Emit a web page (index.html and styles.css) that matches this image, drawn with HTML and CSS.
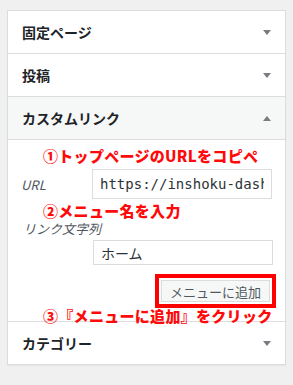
FILE: index.html
```html
<!DOCTYPE html>
<html lang="ja">
<head>
    <meta charset="UTF-8">
    <meta name="viewport" content="width=device-width, initial-scale=1.0">
    <title>メニュー項目を追加</title>
    <link rel="stylesheet" href="styles.css">
</head>
<body>
    <div class="panel">
        <!-- 固定ページ -->
        <div class="section">
            <div class="section-head">
                <span>固定ページ</span>
                <span class="arrow down"></span>
            </div>
        </div>
        <!-- 投稿 -->
        <div class="section">
            <div class="section-head">
                <span>投稿</span>
                <span class="arrow down"></span>
            </div>
        </div>
        <!-- カスタムリンク (open) -->
        <div class="section open">
            <div class="section-head">
                <span>カスタムリンク</span>
                <span class="arrow up"></span>
            </div>
            <div class="section-body">
                <div class="note note-1">①トップページのURLをコピペ</div>
                <div class="field url-field">
                    <label for="url">URL</label>
                    <input type="text" id="url" value="https://inshoku-dash.jp/">
                </div>
                <div class="note note-2">②メニュー名を入力</div>
                <div class="field text-field">
                    <label for="linkText">リンク文字列</label>
                    <input type="text" id="linkText" value="ホーム">
                </div>
                <div class="actions">
                    <button class="add-btn">メニューに追加</button>
                </div>
                <div class="note note-3">③『メニューに追加』をクリック</div>
            </div>
        </div>
        <!-- カテゴリー -->
        <div class="section">
            <div class="section-head">
                <span>カテゴリー</span>
                <span class="arrow down"></span>
            </div>
        </div>
    </div>
</body>
</html>
```

FILE: styles.css
```css
/* General Styles */
body {
    margin: 0;
    padding: 10px 7px;
    background-color: #f0f0f1;
    font-family: "Noto Sans CJK JP", "Noto Sans", sans-serif;
    color: #1d2327;
}

.panel {
    background-color: #fff;
    border: 1px solid #dcdcde;
    box-shadow: 0 1px 1px rgba(0, 0, 0, 0.04);
}

/* Sections */
.section + .section {
    border-top: 1px solid #dcdcde;
}

.section-head {
    height: 42px;
    display: flex;
    align-items: center;
    justify-content: space-between;
    padding: 0 14px 0 14px;
    font-size: 14px;
    font-weight: bold;
}

.open .section-head {
    background-color: #f6f7f7;
    border-bottom: 1px solid #dcdcde;
}

.arrow {
    width: 0;
    height: 0;
    border-left: 4px solid transparent;
    border-right: 4px solid transparent;
}

.arrow.down {
    border-top: 5px solid #787c82;
}

.arrow.up {
    border-bottom: 5px solid #787c82;
}

/* Custom link body */
.section-body {
    position: relative;
    padding: 29px 13px 19px 13px;
}

.field {
    display: flex;
    align-items: center;
}

.field label {
    font-style: italic;
    font-size: 13px;
    color: #50575e;
}

.url-field label {
    width: 72px;
    padding-left: 0;
}

.field input {
    box-sizing: border-box;
    width: 180px;
    height: 30px;
    border: 1px solid #dcdcde;
    padding: 0 7px;
    font-size: 14px;
    color: #2c3338;
    background: #fff;
    outline: none;
}

.url-field input {
    font-family: "DejaVu Sans Mono", monospace;
    font-size: 14px;
}

.text-field {
    flex-direction: column;
    align-items: flex-start;
    margin-top: 19px;
}

.text-field label {
    padding-left: 2px;
    height: 22px;
    line-height: 22px;
}

.text-field input {
    margin-left: 72px;
    height: 25px;
    font-family: "Noto Sans CJK JP", sans-serif;
}

.actions {
    display: flex;
    justify-content: flex-end;
    margin-top: 15px;
    padding-right: 2px;
}

.add-btn {
    font-family: "Noto Sans CJK JP", sans-serif;
    font-size: 13px;
    color: #50575e;
    background: #f6f7f7;
    border: 1px solid #dcdcde;
    height: 22px;
    padding: 0 8px;
    outline: 4px solid #ff0000;
    outline-offset: 2px;
}

/* Red annotations over the form */
.note {
    position: absolute;
    left: 35px;
    font-size: 15px;
    font-weight: 900;
    color: #ff0a0a;
    line-height: 20px;
    white-space: nowrap;
    letter-spacing: 0.3px;
}

.note-1 {
    top: 6px;
}

.note-2 {
    top: 61px;
}

.note-3 {
    top: 166px;
}
```
